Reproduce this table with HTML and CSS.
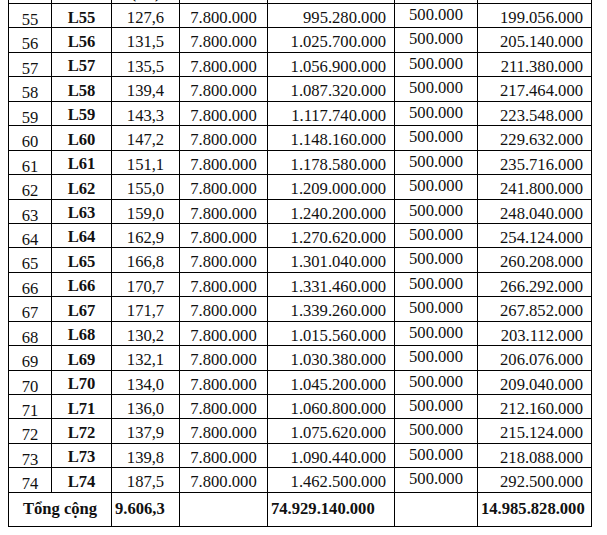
FILE: index.html
```
<!DOCTYPE html>
<html lang="vi">
<head>
<meta charset="utf-8">
<title>Bảng giá lô đất</title>
<link rel="stylesheet" href="styles.css">
</head>
<body>
<table class="price-table">
  <colgroup>
    <col class="c-stt"><col class="c-lot"><col class="c-area"><col class="c-unit"><col class="c-total"><col class="c-fee"><col class="c-deposit">
  </colgroup>
  <thead>
    <tr class="head-row">
      <th>STT</th>
      <th>Lô</th>
      <th class="h-area">Diện tích<br>(m²)</th>
      <th>Đơn giá</th>
      <th>Thành tiền</th>
      <th>Hồ sơ</th>
      <th>Tiền cọc</th>
    </tr>
  </thead>
  <tbody>
    <tr><td class="stt">55</td><td class="lot">L55</td><td class="area">127,6</td><td class="unit">7.800.000</td><td class="num">995.280.000</td><td class="fee">500.000</td><td class="num">199.056.000</td></tr>
    <tr><td class="stt">56</td><td class="lot">L56</td><td class="area">131,5</td><td class="unit">7.800.000</td><td class="num">1.025.700.000</td><td class="fee">500.000</td><td class="num">205.140.000</td></tr>
    <tr><td class="stt">57</td><td class="lot">L57</td><td class="area">135,5</td><td class="unit">7.800.000</td><td class="num">1.056.900.000</td><td class="fee">500.000</td><td class="num">211.380.000</td></tr>
    <tr><td class="stt">58</td><td class="lot">L58</td><td class="area">139,4</td><td class="unit">7.800.000</td><td class="num">1.087.320.000</td><td class="fee">500.000</td><td class="num">217.464.000</td></tr>
    <tr><td class="stt">59</td><td class="lot">L59</td><td class="area">143,3</td><td class="unit">7.800.000</td><td class="num">1.117.740.000</td><td class="fee">500.000</td><td class="num">223.548.000</td></tr>
    <tr><td class="stt">60</td><td class="lot">L60</td><td class="area">147,2</td><td class="unit">7.800.000</td><td class="num">1.148.160.000</td><td class="fee">500.000</td><td class="num">229.632.000</td></tr>
    <tr><td class="stt">61</td><td class="lot">L61</td><td class="area">151,1</td><td class="unit">7.800.000</td><td class="num">1.178.580.000</td><td class="fee">500.000</td><td class="num">235.716.000</td></tr>
    <tr><td class="stt">62</td><td class="lot">L62</td><td class="area">155,0</td><td class="unit">7.800.000</td><td class="num">1.209.000.000</td><td class="fee">500.000</td><td class="num">241.800.000</td></tr>
    <tr><td class="stt">63</td><td class="lot">L63</td><td class="area">159,0</td><td class="unit">7.800.000</td><td class="num">1.240.200.000</td><td class="fee">500.000</td><td class="num">248.040.000</td></tr>
    <tr><td class="stt">64</td><td class="lot">L64</td><td class="area">162,9</td><td class="unit">7.800.000</td><td class="num">1.270.620.000</td><td class="fee">500.000</td><td class="num">254.124.000</td></tr>
    <tr><td class="stt">65</td><td class="lot">L65</td><td class="area">166,8</td><td class="unit">7.800.000</td><td class="num">1.301.040.000</td><td class="fee">500.000</td><td class="num">260.208.000</td></tr>
    <tr><td class="stt">66</td><td class="lot">L66</td><td class="area">170,7</td><td class="unit">7.800.000</td><td class="num">1.331.460.000</td><td class="fee">500.000</td><td class="num">266.292.000</td></tr>
    <tr><td class="stt">67</td><td class="lot">L67</td><td class="area">171,7</td><td class="unit">7.800.000</td><td class="num">1.339.260.000</td><td class="fee">500.000</td><td class="num">267.852.000</td></tr>
    <tr><td class="stt">68</td><td class="lot">L68</td><td class="area">130,2</td><td class="unit">7.800.000</td><td class="num">1.015.560.000</td><td class="fee">500.000</td><td class="num">203.112.000</td></tr>
    <tr><td class="stt">69</td><td class="lot">L69</td><td class="area">132,1</td><td class="unit">7.800.000</td><td class="num">1.030.380.000</td><td class="fee">500.000</td><td class="num">206.076.000</td></tr>
    <tr><td class="stt">70</td><td class="lot">L70</td><td class="area">134,0</td><td class="unit">7.800.000</td><td class="num">1.045.200.000</td><td class="fee">500.000</td><td class="num">209.040.000</td></tr>
    <tr><td class="stt">71</td><td class="lot">L71</td><td class="area">136,0</td><td class="unit">7.800.000</td><td class="num">1.060.800.000</td><td class="fee">500.000</td><td class="num">212.160.000</td></tr>
    <tr><td class="stt">72</td><td class="lot">L72</td><td class="area">137,9</td><td class="unit">7.800.000</td><td class="num">1.075.620.000</td><td class="fee">500.000</td><td class="num">215.124.000</td></tr>
    <tr><td class="stt">73</td><td class="lot">L73</td><td class="area">139,8</td><td class="unit">7.800.000</td><td class="num">1.090.440.000</td><td class="fee">500.000</td><td class="num">218.088.000</td></tr>
    <tr><td class="stt">74</td><td class="lot">L74</td><td class="area">187,5</td><td class="unit">7.800.000</td><td class="num">1.462.500.000</td><td class="fee">500.000</td><td class="num">292.500.000</td></tr>
  </tbody>
  <tfoot>
    <tr class="sum-row">
      <td class="sum-label" colspan="2">Tổng cộng</td>
      <td class="sum-num">9.606,3</td>
      <td></td>
      <td class="sum-num">74.929.140.000</td>
      <td></td>
      <td class="sum-num">14.985.828.000</td>
    </tr>
  </tfoot>
</table>
</body>
</html>
```

FILE: styles.css
```
html, body {
  margin: 0;
  padding: 0;
  background: #ffffff;
}

body {
  font-family: "Liberation Serif", "Times New Roman", Times, serif;
  font-size: 16.6px;
  color: #111111;
}

.price-table {
  border-collapse: collapse;
  table-layout: fixed;
  width: 584px;
  margin: -41px 0 0 8px;
  font-family: "Liberation Serif", "Times New Roman", Times, serif;
}

.price-table th,
.price-table td {
  border: 1px solid #000000;
  padding: 0;
}

.c-stt { width: 43px; }
.c-lot { width: 60px; }
.c-area { width: 68px; }
.c-unit { width: 88px; }
.c-total { width: 127px; }
.c-fee { width: 83px; }
.c-deposit { width: 114px; }

.head-row { height: 44px; }

.price-table .head-row th {
  font-weight: bold;
  line-height: 19px;
  vertical-align: middle;
  text-align: center;
}

.price-table .head-row .h-area {
  vertical-align: bottom;
  padding-bottom: 1px;
}

tbody tr { height: 24.45px; }

.price-table tbody td {
  line-height: 14px;
  vertical-align: top;
  padding-top: 7px;
  white-space: nowrap;
}

.price-table tbody .stt { text-align: center; padding-top: 9px; }
.price-table tbody .lot { text-align: center; font-weight: bold; padding-top: 6.5px; }
.price-table tbody .area { text-align: center; }
.price-table tbody .unit { text-align: center; }
.price-table tbody .fee { text-align: center; padding-top: 4px; }
.price-table tbody .num { text-align: right; padding-right: 8px; }

.sum-row { height: 34px; }

.price-table .sum-row td {
  font-weight: bold;
  line-height: 14px;
  vertical-align: top;
  padding-top: 9.4px;
  white-space: nowrap;
}

.price-table .sum-row .sum-label { text-align: center; }
.price-table .sum-row .sum-num { text-align: left; padding-left: 3px; }
```
